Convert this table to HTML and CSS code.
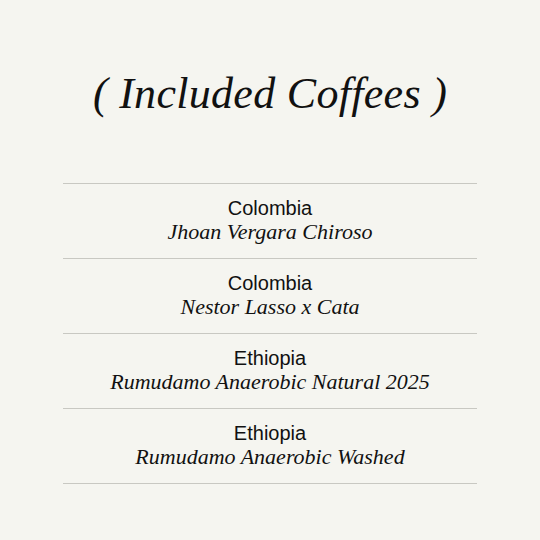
FILE: index.html
```html
<!DOCTYPE html>
<html>
<head>
<meta charset="utf-8">
<link rel="stylesheet" href="styles.css">
</head>
<body>
<main class="page">
  <h1 class="title">( Included Coffees )</h1>
  <ul class="list">
    <li class="item"><span class="origin">Colombia</span><span class="name">Jhoan Vergara Chiroso</span></li>
    <li class="item"><span class="origin">Colombia</span><span class="name">Nestor Lasso x Cata</span></li>
    <li class="item"><span class="origin">Ethiopia</span><span class="name">Rumudamo Anaerobic Natural 2025</span></li>
    <li class="item"><span class="origin">Ethiopia</span><span class="name">Rumudamo Anaerobic Washed</span></li>
  </ul>
</main>
</body>
</html>
```
FILE: styles.css
```css
html, body {
  margin: 0;
  padding: 0;
  background: #f5f5f0;
}
.page {
  width: 540px;
  height: 540px;
  display: flex;
  flex-direction: column;
  align-items: center;
  color: #111;
}
.title {
  margin: 64px 0 0;
  font-family: "Liberation Serif", "DejaVu Serif", serif;
  font-style: italic;
  font-weight: normal;
  font-size: 44px;
  line-height: 60px;
  letter-spacing: 0.3px;
}
.list {
  list-style: none;
  margin: 59px 0 0;
  padding: 0;
  width: 414px;
  border-top: 1px solid #c8c8c2;
}
.item {
  border-bottom: 1px solid #c8c8c2;
  display: flex;
  flex-direction: column;
  align-items: center;
  justify-content: center;
  padding-bottom: 2px;
  box-sizing: border-box;
  height: 75px;
}
.origin {
  font-family: "Liberation Sans", "Inter", sans-serif;
  font-size: 20px;
  line-height: 23px;
}
.name {
  font-family: "Liberation Serif", serif;
  font-style: italic;
  font-size: 22px;
  line-height: 24px;
}
```
